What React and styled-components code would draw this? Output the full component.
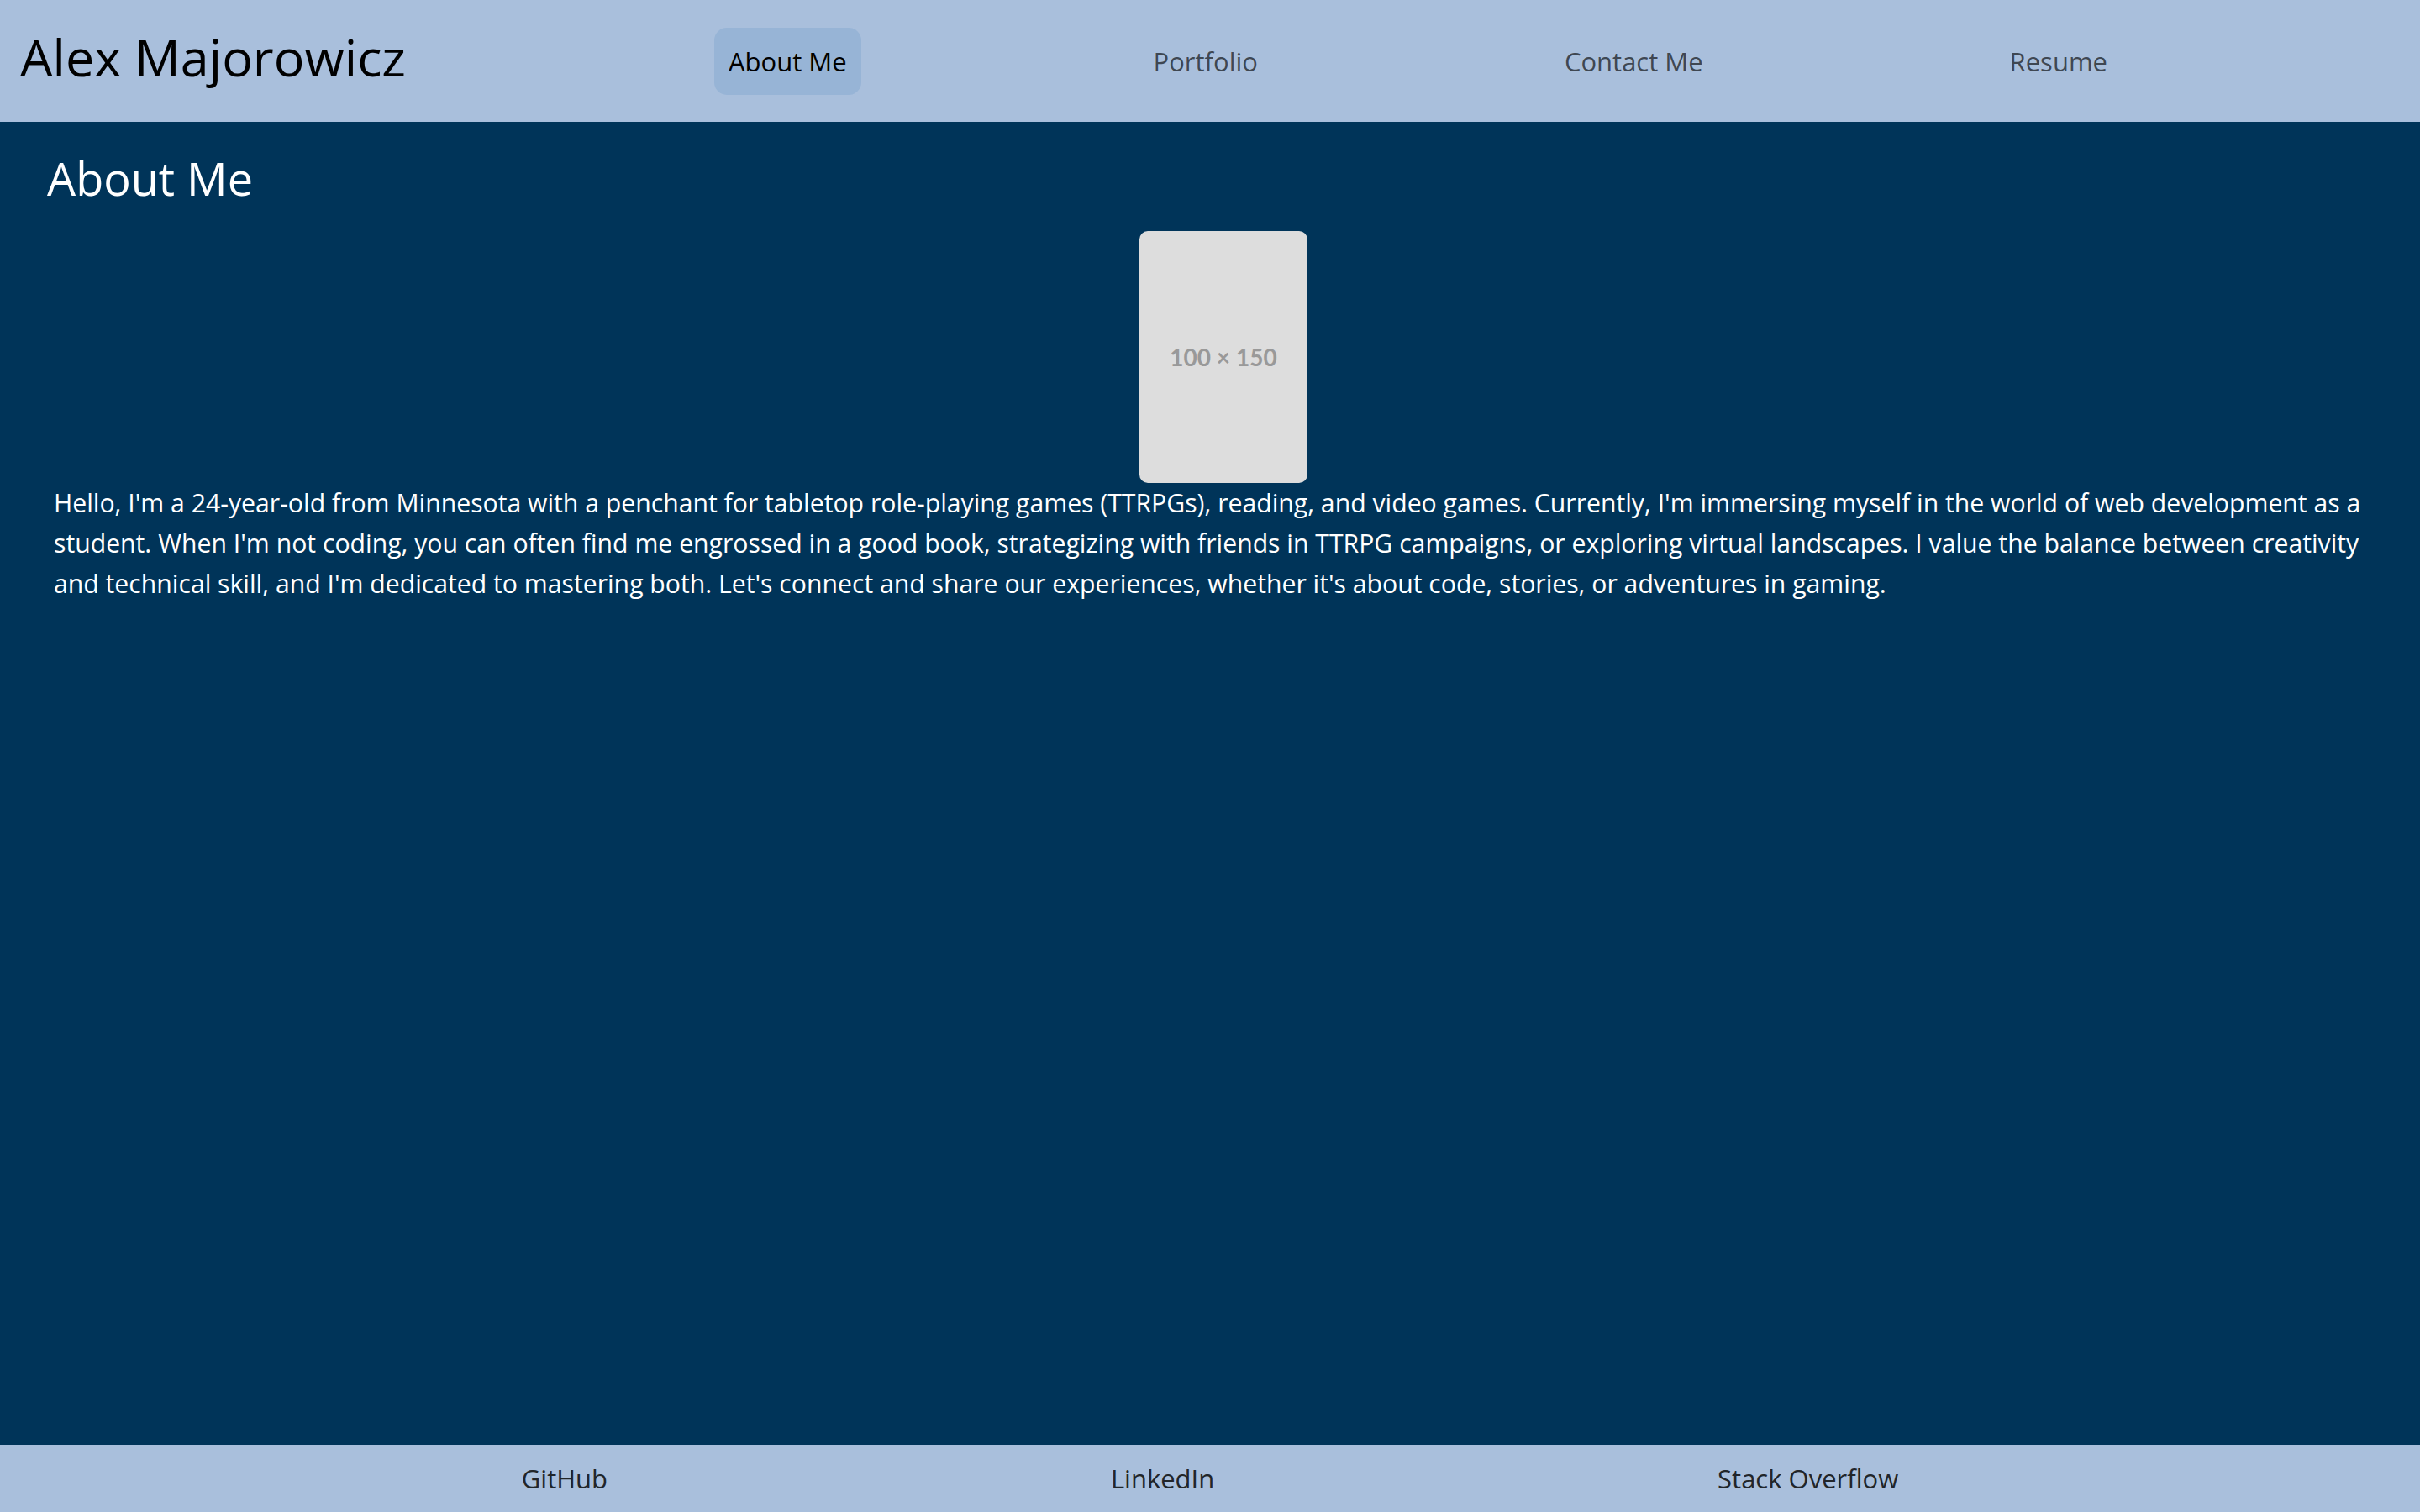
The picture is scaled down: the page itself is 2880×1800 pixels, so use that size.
import React from "react";
import styled, { createGlobalStyle } from "styled-components";

const GlobalStyle = createGlobalStyle`
  html, body { margin: 0; padding: 0; }
  body {
    font-family: "Open Sans", "Noto Sans", sans-serif;
    background: #003459;
  }
  * { box-sizing: border-box; }
`;

const Page = styled.div`
  min-height: 100vh;
  display: flex;
  flex-direction: column;
  background: #003459;
`;

const Header = styled.header`
  height: 145px;
  flex-shrink: 0;
  display: flex;
  align-items: center;
  padding: 0 24px;
  background: #a9bfdc;
`;

const Brand = styled.h1`
  margin: 0 0 10px;
  font-size: 61px;
  font-weight: 400;
  line-height: 1.2;
  color: #000;
  white-space: nowrap;
`;

const Nav = styled.nav`
  flex: 1;
  margin-left: 36px;
  display: flex;
  justify-content: space-evenly;
  align-items: center;
`;

const NavLink = styled.a`
  display: block;
  padding: 15px 17px;
  border-radius: 15px;
  font-size: 31px;
  line-height: 50px;
  text-decoration: none;
  color: ${(p) => (p.$active ? "#000" : "rgba(0, 0, 0, 0.65)")};
  background: ${(p) => (p.$active ? "#97b4d6" : "transparent")};
`;

const Main = styled.main`
  flex: 1;
  padding: 35px 32px 0 56px;
  color: #fff;
`;

const Heading = styled.h2`
  margin: 0 0 30px;
  font-size: 54px;
  font-weight: 400;
  line-height: 1.2;
`;

const Body = styled.div`
  padding-left: 8px;
`;

const Placeholder = styled.div`
  width: 200px;
  height: 300px;
  margin: 0 auto;
  border-radius: 10px;
  background: #dddddd;
  display: flex;
  align-items: center;
  justify-content: center;
  font-family: Lato, "Open Sans", sans-serif;
  font-weight: 700;
  font-size: 28px;
  color: #999999;
`;

const Paragraph = styled.p`
  margin: 0;
  font-size: 30.2px;
  line-height: 48px;
`;

const Footer = styled.footer`
  height: 80px;
  flex-shrink: 0;
  display: flex;
  justify-content: space-evenly;
  align-items: center;
  padding: 0 22px;
  background: #a9bfdc;
`;

const FooterLink = styled.a`
  font-size: 31px;
  line-height: 1.5;
  color: #212529;
  text-decoration: none;
`;

const links = [
  { label: "About Me", active: true },
  { label: "Portfolio" },
  { label: "Contact Me" },
  { label: "Resume" },
];

export default function App() {
  return (
    <Page>
      <GlobalStyle />
      <Header>
        <Brand>Alex Majorowicz</Brand>
        <Nav>
          {links.map((l) => (
            <NavLink key={l.label} href="#" $active={l.active}>
              {l.label}
            </NavLink>
          ))}
        </Nav>
      </Header>
      <Main>
        <Heading>About Me</Heading>
        <Body>
          <Placeholder role="img" aria-label="placeholder">100 × 150</Placeholder>
          <Paragraph>
            Hello, I'm a 24-year-old from Minnesota with a penchant for tabletop role-playing games (TTRPGs), reading, and video games. Currently, I'm immersing myself in the world of web development as a student. When I'm not coding, you can often find me engrossed in a good book, strategizing with friends in TTRPG campaigns, or exploring virtual landscapes. I value the balance between creativity and technical skill, and I'm dedicated to mastering both. Let's connect and share our experiences, whether it's about code, stories, or adventures in gaming.
          </Paragraph>
        </Body>
      </Main>
      <Footer>
        <FooterLink href="#">GitHub</FooterLink>
        <FooterLink href="#">LinkedIn</FooterLink>
        <FooterLink href="#">Stack Overflow</FooterLink>
      </Footer>
    </Page>
  );
}
